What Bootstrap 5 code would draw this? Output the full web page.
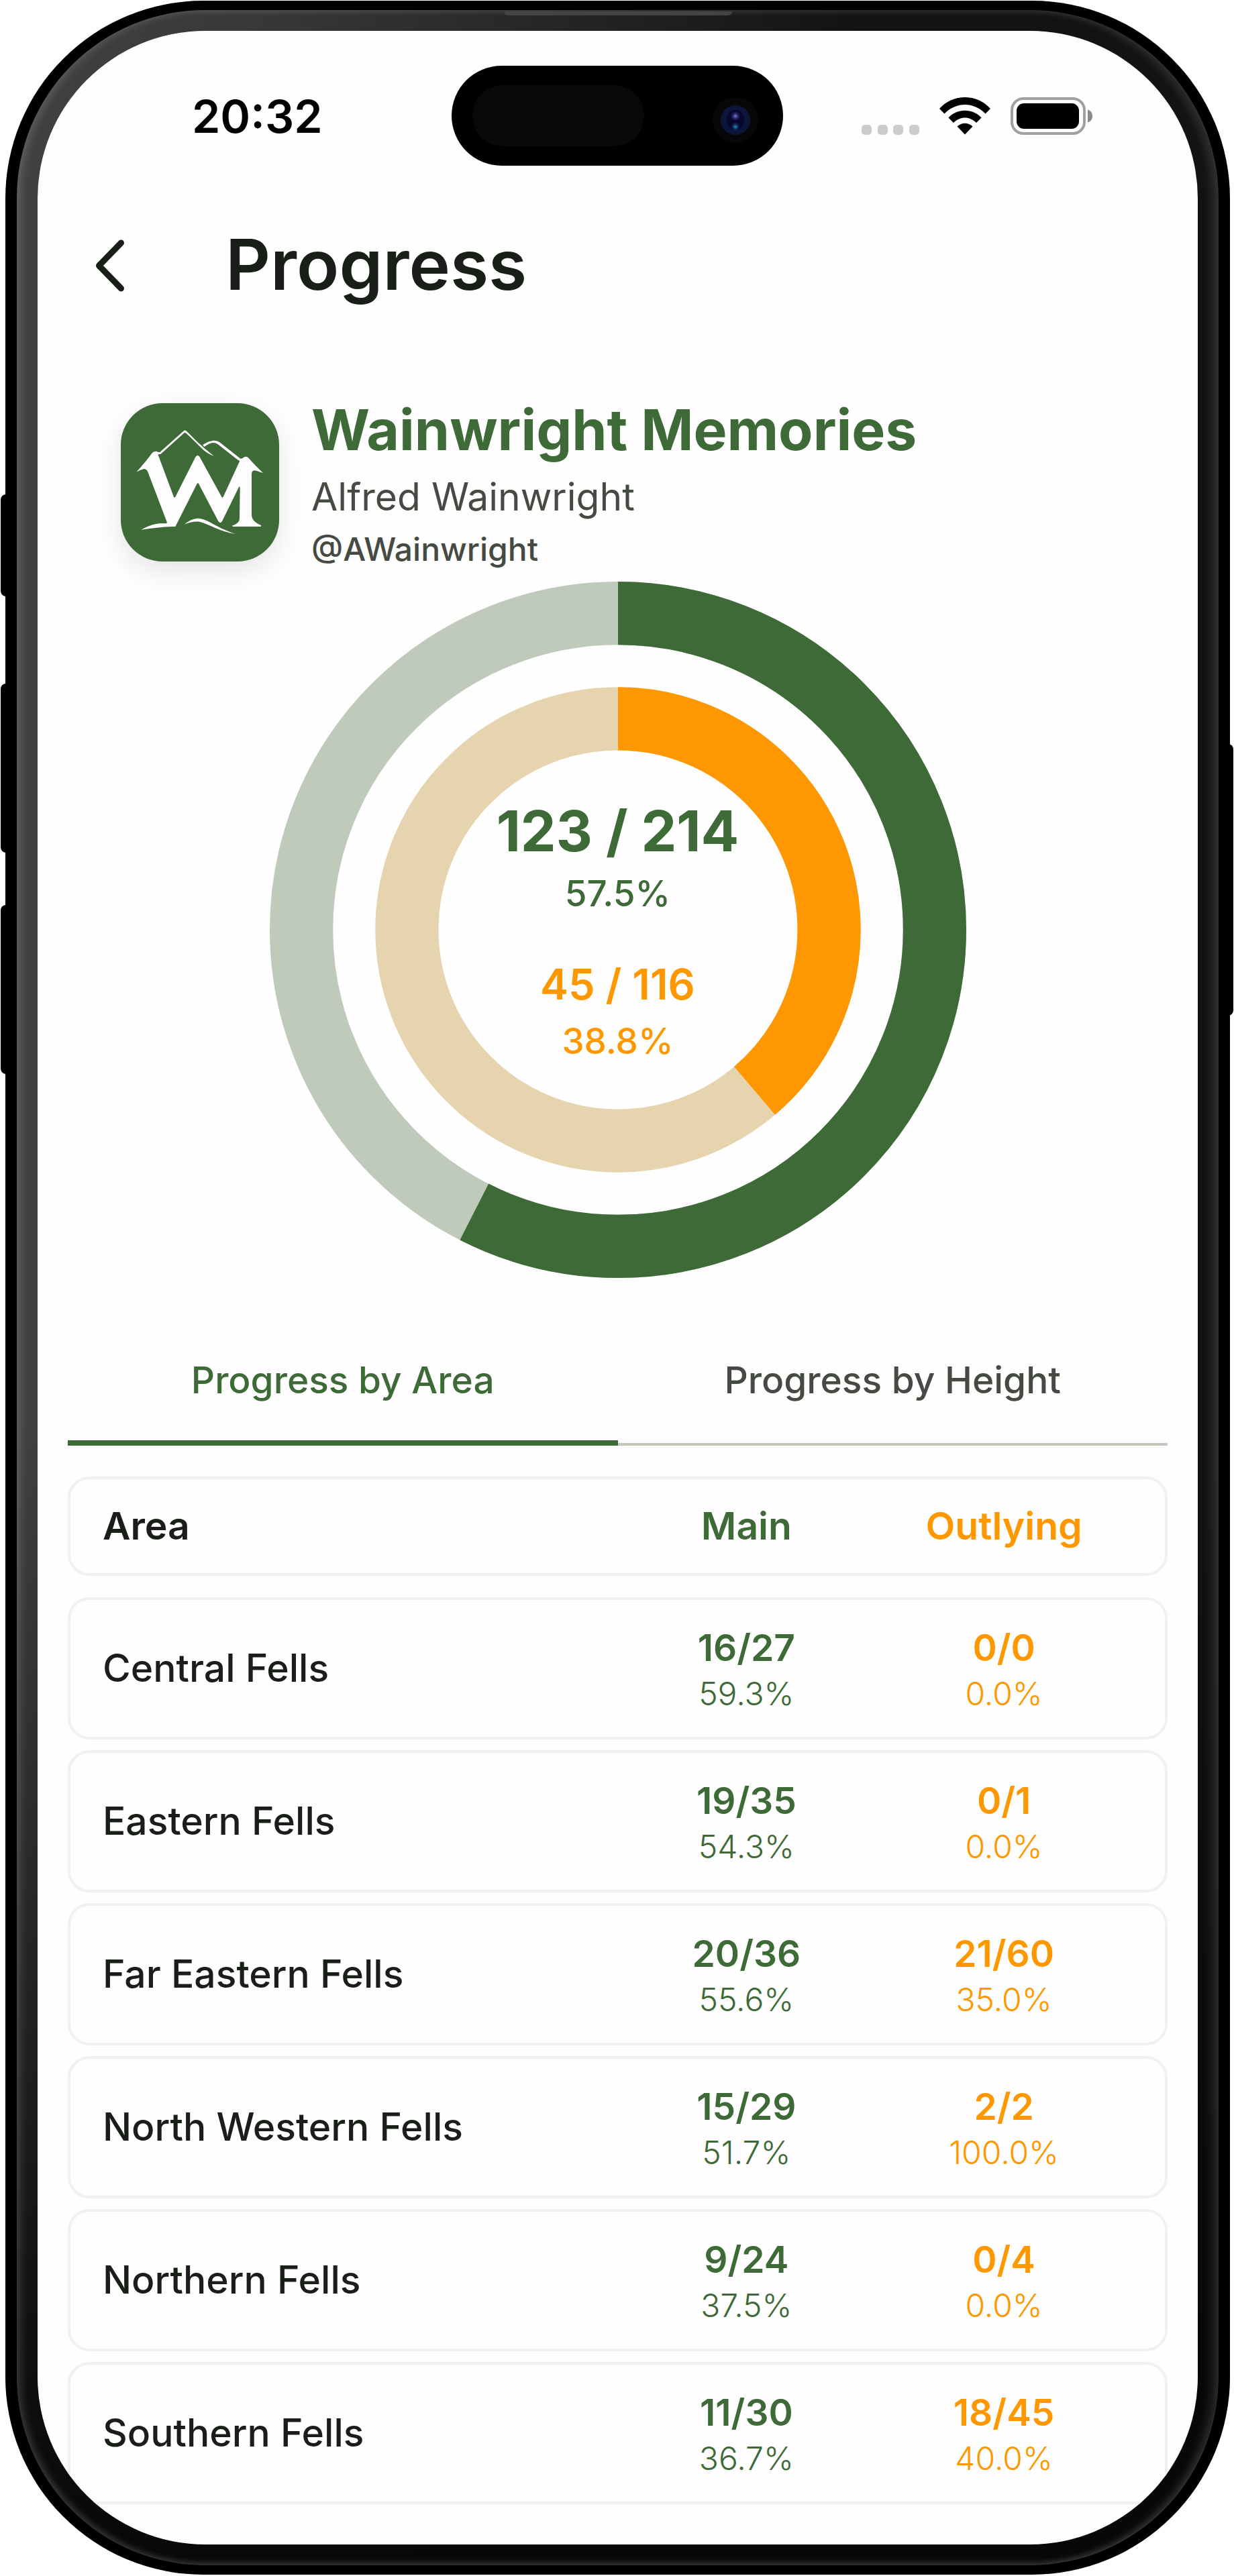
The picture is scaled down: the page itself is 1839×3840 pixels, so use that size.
<!DOCTYPE html>
<html lang="en">
<head>
<meta charset="utf-8">
<meta name="viewport" content="width=device-width, initial-scale=1">
<title>Progress – Wainwright Memories</title>
<link href="https://cdn.jsdelivr.net/npm/bootstrap@5.3.0/dist/css/bootstrap.min.css" rel="stylesheet">
<style>
:root{--fell:#3e6a38;--outlying:#ff9800;--ink:#1a1e19;--ink-soft:#454b43;--hairline:#f1f1f0}
body{font-family:Inter,"Liberation Sans",sans-serif;color:var(--ink);background:#fff;padding:1px 6px 2px 8px}
.text-fell{color:var(--fell)}
.text-outlying{color:var(--outlying)}
.text-soft{color:var(--ink-soft)}

/* Device frame */
.phone{background:#000;border-radius:295px;padding:14px 17px}
.bezel{border-radius:280px;padding:31px;
  background:linear-gradient(to bottom,transparent 55%,rgba(5,5,5,.75) 88%,#080808),linear-gradient(to right,#414141,#383838 20%,#131313 70%);
  box-shadow:inset 7px 0 12px rgba(255,255,255,.13),inset -11px 0 12px rgba(255,255,255,.1),inset 0 -5px 10px rgba(255,255,255,.08)}
.screen{background:#fefefe;border-radius:250px;padding-top:52px;padding-bottom:60px}
.side-key{width:9px;background:#000;left:1px;border-radius:8px 0 0 8px}
.key-action{top:737px;height:152px}
.key-up{top:1019px;height:252px}
.key-down{top:1349px;height:252px}
.key-power{top:1109px;height:405px;left:auto;right:1px;border-radius:0 8px 8px 0}
.earpiece{top:16px;left:50%;width:340px;height:6px;margin-left:-170px;background:#444;border-radius:0 0 8px 8px}

/* Status bar */
.island{width:494px;height:149px;border-radius:75px;background:#000;padding:0 31px}
.sensor{width:256px;height:91px;border-radius:46px;background:#090909}
.status-side{flex:1 1 0}
.clock{font-size:68px;line-height:80px;font-weight:600;color:#000;padding-left:38px}
.status-icons{gap:30px;padding-right:40px}

/* App bar and profile */
.app-bar{height:294px;padding:0 78px}
.back-btn{width:60px;height:90px;border:0;padding:0;background:none;color:var(--ink)}
.page-title{font-size:104px;line-height:120px;font-weight:600;padding-left:142px}
.profile{padding:48px 124px 18px;gap:48px}
.app-logo{width:236px;height:236px;border-radius:62px;background:var(--fell);box-shadow:0 14px 42px rgba(0,0,0,.1)}
.app-name{font-size:84px;line-height:104px;font-weight:700}
.user-name{font-size:57px;line-height:96px}
.user-handle{font-size:48px;line-height:60px;font-weight:500}

/* Chart */
.chart{width:1038px;max-width:100%}
.chart-text{font-weight:500}
.main-count{font-size:84px;line-height:100px;font-weight:700}
.main-share{font-size:53px;line-height:86px}
.out-count{font-size:63px;line-height:108px;font-weight:600;padding-top:38px}
.out-share{font-size:53px;line-height:62px}

/* Tabs */
.section-x{padding-left:45px;padding-right:45px}
.area-tabs{padding-top:62px}
.area-tab{border:0;border-bottom:4px solid #c2c9bf;background:none;padding:58px 0 62px;font-size:55px;line-height:64px;font-weight:500;color:var(--ink-soft)}
.area-tab.active{border-bottom:8px solid var(--fell);padding-bottom:58px;color:var(--fell)}

/* Table laid out as a stack of cards */
.area-table{padding-top:46px;font-size:57px;gap:16px}
.area-table thead{padding-bottom:16px}
.area-table tbody{gap:16px}
.fell-row{border:4px solid var(--hairline);border-radius:32px;padding:33px 48px}
.head-row{padding-top:40px;padding-bottom:40px;line-height:60px}
.head-row th{font-weight:600}
.fell-row > *{flex:1 1 0;padding:0;text-align:center}
.fell-row > :first-child{flex:2 1 0;text-align:left}
.fell-row th[scope=row]{font-weight:500}
.done{font-size:55px;line-height:76px;font-weight:600}
.share{font-size:48px;line-height:62px;font-weight:300}
</style>
<script src="https://cdn.jsdelivr.net/npm/bootstrap@5.3.0/dist/js/bootstrap.bundle.min.js"></script>
</head>
<body class="position-relative">
<div class="side-key key-action position-absolute"></div>
<div class="side-key key-up position-absolute"></div>
<div class="side-key key-down position-absolute"></div>
<div class="side-key key-power position-absolute"></div>
<div class="phone position-relative">
<div class="bezel">
<div class="earpiece position-absolute"></div>
<div class="screen overflow-hidden">

  <div class="d-flex align-items-center">
    <div class="status-side clock text-center">20:32</div>
    <div class="island d-flex align-items-center justify-content-between">
      <div class="sensor"></div>
      <svg width="80" height="80" viewBox="0 0 80 80" aria-hidden="true">
        <defs>
          <radialGradient id="lens"><stop offset="0" stop-color="#121a5e"/><stop offset=".6" stop-color="#0b1440"/><stop offset="1" stop-color="#0c1834"/></radialGradient>
          <radialGradient id="glintTop"><stop offset="0" stop-color="#7a78e8"/><stop offset="1" stop-color="#1b1c6a" stop-opacity="0"/></radialGradient>
          <radialGradient id="glintLow"><stop offset="0" stop-color="#2f8fc4"/><stop offset="1" stop-color="#0f2c6a" stop-opacity="0"/></radialGradient>
        </defs>
        <circle cx="40" cy="46" r="34" fill="#080608"/>
        <circle cx="40" cy="46" r="22" fill="url(#lens)"/>
        <ellipse cx="40" cy="46" rx="13" ry="15" fill="#06072a"/>
        <circle cx="40" cy="40" r="8" fill="url(#glintTop)"/>
        <circle cx="40" cy="56" r="7" fill="url(#glintLow)"/>
      </svg>
    </div>
    <div class="status-side status-icons d-flex justify-content-center align-items-end">
      <svg width="86" height="15" viewBox="0 0 86 15" fill="#ccc" aria-hidden="true"><rect width="15" height="15" rx="5"/><rect x="24" width="15" height="15" rx="5"/><rect x="47" width="15" height="15" rx="5"/><rect x="71" width="15" height="15" rx="5"/></svg>
      <svg width="76" height="56" viewBox="0 0 76 56" aria-label="Wi-Fi">
        <path d="M0 17C20-5.700 56-5.700 76 17L68.500 24.500C51 6.500 25 6.500 7.500 24.500Z"/>
        <path d="M13.500 30.500C26 16 50 16 62.500 30.500L55 38C45 28 31 28 21 38Z"/>
        <path d="M26.500 43.500C33 37 43 37 49.500 43.500L38 55.500Z"/>
      </svg>
      <svg width="122" height="56" viewBox="0 0 122 56" aria-label="Battery full">
        <rect x="2" y="2" width="108" height="52" rx="17" fill="none" stroke="#a0a0a0" stroke-width="4"/>
        <rect x="9" y="9" width="93" height="38" rx="11"/>
        <path d="M115 18.500C120 20 122 24 122 28C122 32 120 36 115 37.500Z" fill="#8a8a8a"/>
      </svg>
    </div>
  </div>

  <header class="app-bar d-flex align-items-center">
    <button type="button" class="back-btn" aria-label="Back">
      <svg class="d-block" width="60" height="90" viewBox="0 0 60 90" fill="none" stroke="currentColor" stroke-width="9" stroke-linecap="round" stroke-linejoin="round"><path d="M46.500 13L13.500 47L46.500 81"/></svg>
    </button>
    <h1 class="page-title mb-0">Progress</h1>
  </header>

  <section class="profile d-flex align-items-center">
    <div class="app-logo flex-shrink-0">
      <svg width="236" height="236" viewBox="6 9 708 708" fill="#fdfdfd" aria-label="Wainwright Memories logo">
        <path d="M76 316C92 300 120 266 138 242C148 226 160 220 172 227L180 229L286 134Q292 127 300 134C322 154 344 180 367 199C385 216 404 231 422 245C402 238 383 226 366 209C342 187 318 160 296 142Q292 139 288 143L184 237L172 238L243 428Q246 433 250 428L340 250Q350 236 359 250L457 428Q460 433 464 428L538 267L531 264L440 193Q428 184 412 187Q395 191 379 204L372 196C392 182 410 176 425 176Q438 176 448 184L541 257Q548 258 555 252Q565 245 575 252C592 270 614 295 642 321C628 319 614 310 602 310Q591 312 591 326V510C592 534 614 546 634 556L632 561H506L505 556C522 550 537 542 537 524L539 386Q537 379 533 386L459 537Q451 550 442 537L354 369Q351 363 347 369L250 561C200 560 150 568 98 575C120 562 148 550 180 547H208Q214 547 212 540L129 322Q123 302 109 303C96 306 87 312 76 316Z"/>
        <path d="M290 551C310 534 330 525 350 524C395 525 430 565 520 594C450 585 400 549 360 540C335 536 313 543 290 551Z"/>
      </svg>
    </div>
    <div>
      <div class="app-name text-fell">Wainwright Memories</div>
      <div class="user-name text-soft">Alfred Wainwright</div>
      <div class="user-handle text-soft">@AWainwright</div>
    </div>
  </section>

  <section class="chart position-relative mx-auto">
    <svg class="d-block w-100" viewBox="0 0 1036 1036" fill="none" stroke-width="94" aria-hidden="true">
      <g transform="rotate(-90 518 518)">
        <circle cx="518" cy="518" r="471" stroke="#bfcabb"/>
        <circle cx="518" cy="518" r="471" stroke="#3e6a38" pathLength="1000" stroke-dasharray="575 1000"/>
        <circle cx="518" cy="518" r="314" stroke="#e6d4ae"/>
        <circle cx="518" cy="518" r="314" stroke="#ff9800" pathLength="1000" stroke-dasharray="388 1000"/>
      </g>
    </svg>
    <div class="chart-text position-absolute top-0 start-0 w-100 h-100 d-flex flex-column justify-content-center text-center">
      <div class="main-count text-fell">123 / 214</div>
      <div class="main-share text-fell">57.5%</div>
      <div class="out-count text-outlying">45 / 116</div>
      <div class="out-share text-outlying">38.8%</div>
    </div>
  </section>

  <div class="area-tabs section-x d-flex" role="tablist">
    <button type="button" class="area-tab active w-50" role="tab" aria-selected="true">Progress by Area</button>
    <button type="button" class="area-tab w-50" role="tab" aria-selected="false">Progress by Height</button>
  </div>

  <table class="area-table section-x d-flex flex-column">
    <thead class="d-block">
      <tr class="fell-row head-row d-flex"><th scope="col">Area</th><th scope="col" class="text-fell">Main</th><th scope="col" class="text-outlying">Outlying</th></tr>
    </thead>
    <tbody class="d-flex flex-column">
      <tr class="fell-row d-flex align-items-center"><th scope="row">Central Fells</th><td class="text-fell"><div class="done">16/27</div><div class="share">59.3%</div></td><td class="text-outlying"><div class="done">0/0</div><div class="share">0.0%</div></td></tr>
      <tr class="fell-row d-flex align-items-center"><th scope="row">Eastern Fells</th><td class="text-fell"><div class="done">19/35</div><div class="share">54.3%</div></td><td class="text-outlying"><div class="done">0/1</div><div class="share">0.0%</div></td></tr>
      <tr class="fell-row d-flex align-items-center"><th scope="row">Far Eastern Fells</th><td class="text-fell"><div class="done">20/36</div><div class="share">55.6%</div></td><td class="text-outlying"><div class="done">21/60</div><div class="share">35.0%</div></td></tr>
      <tr class="fell-row d-flex align-items-center"><th scope="row">North Western Fells</th><td class="text-fell"><div class="done">15/29</div><div class="share">51.7%</div></td><td class="text-outlying"><div class="done">2/2</div><div class="share">100.0%</div></td></tr>
      <tr class="fell-row d-flex align-items-center"><th scope="row">Northern Fells</th><td class="text-fell"><div class="done">9/24</div><div class="share">37.5%</div></td><td class="text-outlying"><div class="done">0/4</div><div class="share">0.0%</div></td></tr>
      <tr class="fell-row d-flex align-items-center"><th scope="row">Southern Fells</th><td class="text-fell"><div class="done">11/30</div><div class="share">36.7%</div></td><td class="text-outlying"><div class="done">18/45</div><div class="share">40.0%</div></td></tr>
    </tbody>
  </table>

</div>
</div>
</div>
</body>
</html>
